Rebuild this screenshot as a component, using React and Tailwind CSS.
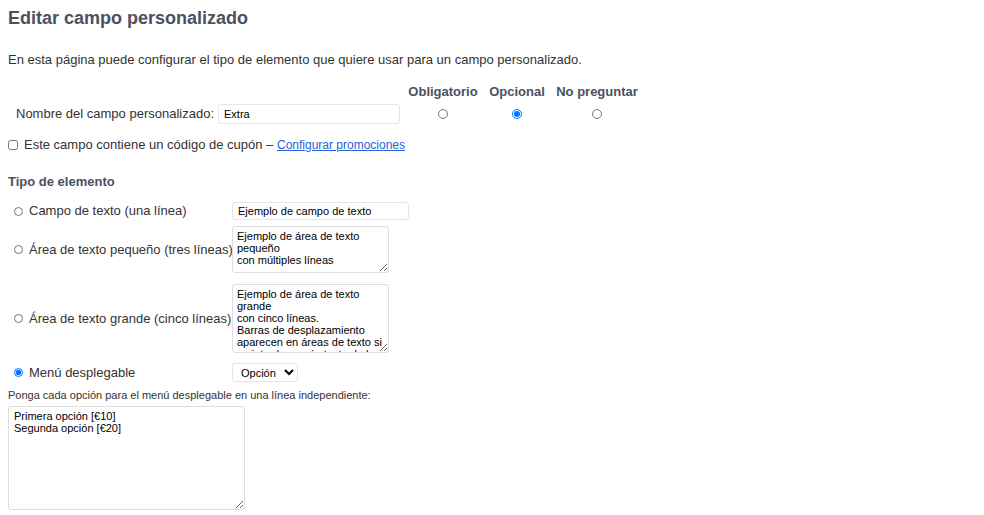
export default function App() {
  const font = { fontFamily: '"Liberation Sans", Arial, sans-serif' };
  return (
    <div className="bg-white w-[984px] h-[515px] overflow-hidden text-[13px] text-[#333]" style={font}>
      <div className="pl-2 pt-[6px]">
        <h1 className="text-[18px] font-bold text-[#4a5160] leading-[24px]">Editar campo personalizado</h1>
        <p className="mt-[21px] leading-[18px]">En esta página puede configurar el tipo de elemento que quiere usar para un campo personalizado.</p>

        <div className="mt-[14px] flex">
          <div className="w-[394px]" />
          <div className="flex font-bold leading-[18px] text-[#4a5160]">
            <div className="w-[82px] text-center">Obligatorio</div>
            <div className="w-[66px] text-center">Opcional</div>
            <div className="w-[94px] text-center">No preguntar</div>
          </div>
        </div>
        <div className="flex items-center mt-[3px]">
          <div className="w-[394px] flex items-center pl-2 whitespace-nowrap">
            <span>Nombre del campo personalizado:</span>
            <input defaultValue="Extra" className="ml-1 w-[182px] h-[20px] border border-[#e5e5e5] rounded-[3px] px-[5px] text-[11px] text-black outline-none" />
          </div>
          <div className="flex">
            <div className="w-[82px] flex justify-center"><input type="radio" name="req" className="w-[10px] h-[10px]" /></div>
            <div className="w-[66px] flex justify-center"><input type="radio" name="req" defaultChecked className="w-[10px] h-[10px]" /></div>
            <div className="w-[94px] flex justify-center"><input type="radio" name="req" className="w-[10px] h-[10px]" /></div>
          </div>
        </div>

        <div className="flex items-center mt-[12px] leading-[18px] whitespace-nowrap">
          <input type="checkbox" className="w-[10px] h-[10px] m-0 mr-[6px]" />
          <span>Este campo contiene un código de cupón – <a href="#" className="text-[#2563d8] underline text-[12px]">Configurar promociones</a></span>
        </div>

        <div className="mt-[19px] font-bold leading-[18px] text-[#4a5160]">Tipo de elemento</div>

        <div className="mt-[11px] flex flex-col whitespace-nowrap">
          <div className="flex items-center h-[18px]">
            <label className="w-[224px] flex items-center pl-[6px]"><input type="radio" name="t" className="w-[9px] h-[9px] m-0 mr-[6px]" />Campo de texto (una línea)</label>
            <input defaultValue="Ejemplo de campo de texto" className="w-[177px] h-[18px] border border-[#e5e5e5] rounded-[3px] px-[5px] text-[11px] text-black outline-none" />
          </div>
          <div className="flex items-center mt-[6px]">
            <label className="w-[224px] flex items-center pl-[6px]"><input type="radio" name="t" className="w-[9px] h-[9px] m-0 mr-[6px]" />Área de texto pequeño (tres líneas)</label>
            <textarea rows={3} defaultValue={"Ejemplo de área de texto pequeño\ncon múltiples líneas"} className="w-[157px] h-[47px] border border-[#ddd] rounded-[3px] px-[4px] py-[3px] text-[11px] leading-[12px] text-black outline-none whitespace-pre-wrap" />
          </div>
          <div className="flex items-center mt-[11px]">
            <label className="w-[224px] flex items-center pl-[6px]"><input type="radio" name="t" className="w-[9px] h-[9px] m-0 mr-[6px]" />Área de texto grande (cinco líneas)</label>
            <textarea defaultValue={"Ejemplo de área de texto grande\ncon cinco líneas.\nBarras de desplazamiento aparecen en áreas de texto si se introduce más texto de lo que cabe."} className="w-[157px] h-[69px] border border-[#ddd] rounded-[3px] px-[4px] py-[3px] text-[11px] leading-[12px] text-black outline-none overflow-y-scroll whitespace-pre-wrap" />
          </div>
          <div className="flex items-center mt-[10px]">
            <label className="w-[224px] flex items-center pl-[6px]"><input type="radio" name="t" defaultChecked className="w-[9px] h-[9px] m-0 mr-[6px]" />Menú desplegable</label>
            <select className="h-[19px] w-[66px] border border-[#e5e5e5] rounded-[3px] text-[11px] text-black px-1">
              <option>Opción 1</option>
              <option>Opción 2</option>
            </select>
          </div>
        </div>

        <p className="mt-[5px] text-[11px] leading-[14px]">Ponga cada opción para el menú desplegable en una línea independiente:</p>
        <textarea defaultValue={"Primera opción [€10]\nSegunda opción [€20]"} className="mt-[4px] block w-[237px] h-[104px] border border-[#ddd] rounded-[3px] px-[5px] py-[3px] text-[11px] leading-[12px] text-black outline-none" />
      </div>
    </div>
  );
}
